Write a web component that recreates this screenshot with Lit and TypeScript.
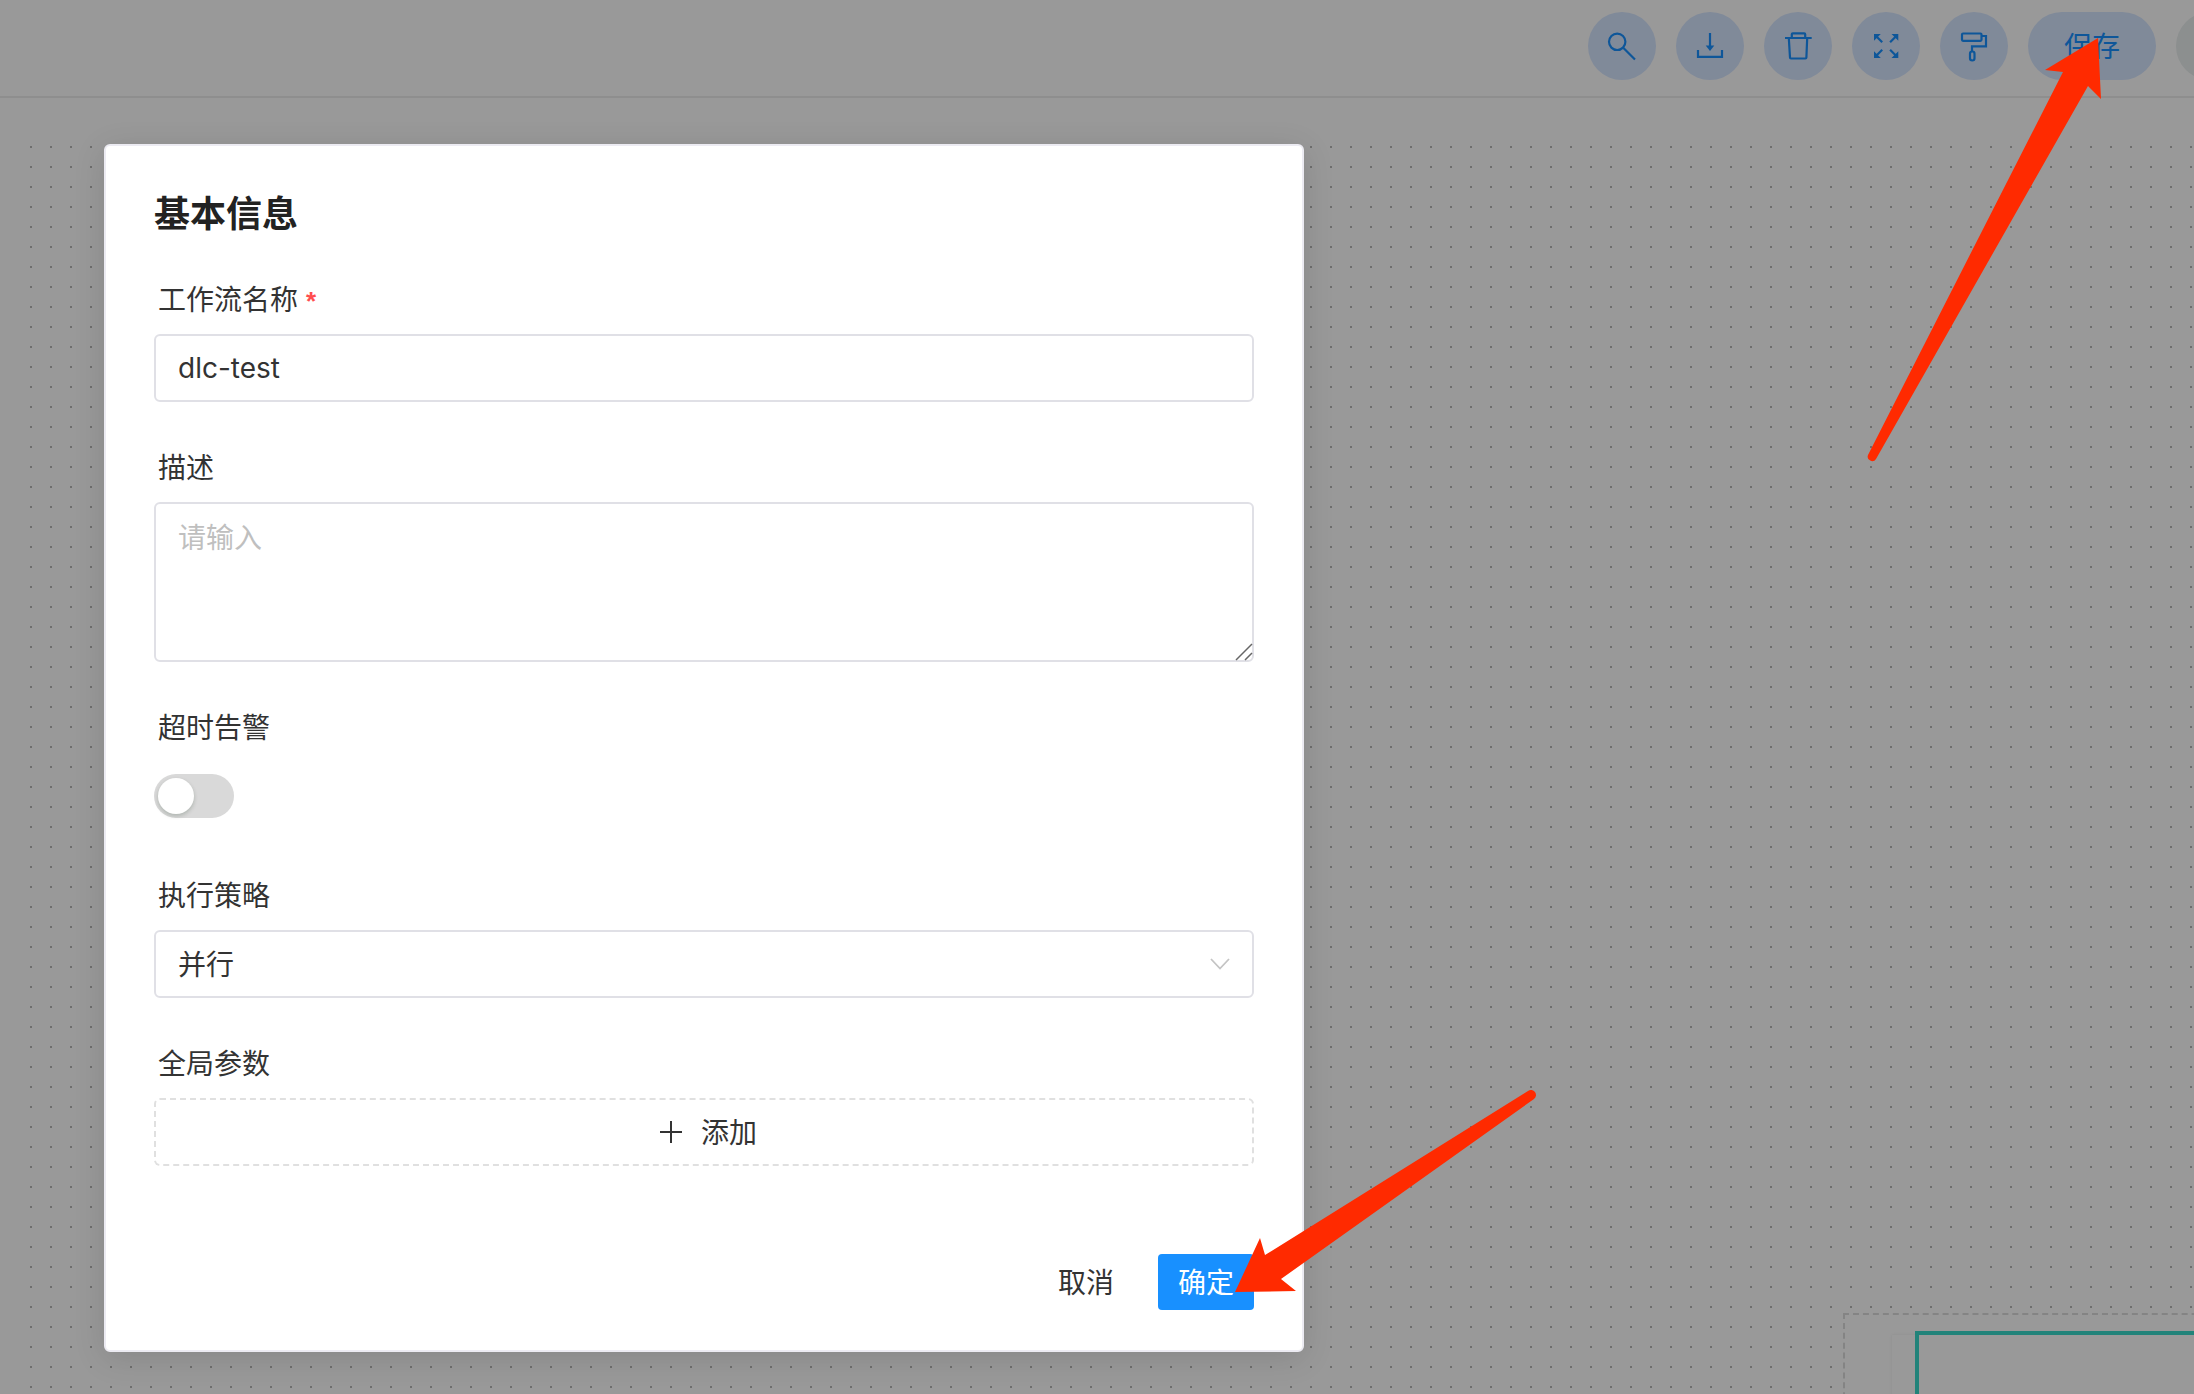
import { LitElement, html, css, svg } from "lit";
import { customElement } from "lit/decorators.js";

const ICONS = [
  svg`<circle cx="11.200" cy="11.800" r="8.200"/><path d="M17.500 18l11.500 11.500"/>`,
  svg`<path d="M16 3v14"/><path class="fill" d="M11.700 15.500h8.600L16 21z"/><path d="M4 20v6.800h24V20"/>`,
  svg`<path d="M3 8h26.700M9.800 8V4.300a1 1 0 0 1 1-1h11.400a1 1 0 0 1 1 1V8M6.800 8l1.200 19.500a1 1 0 0 0 1 1h14.400a1 1 0 0 0 1-1L25.200 8"/>`,
  svg`<path class="fill" d="M4 4h6.800L4 10.800zM28.300 4v6.800L21.500 4zM4 28v-6.800L10.800 28zM28.300 28h-6.800l6.800-6.800z"/><path d="M6.500 6.500l5.700 5.700M25.800 6.500l-5.700 5.700M6.500 25.500l5.700-5.700M25.800 25.500l-5.700-5.700"/>`,
  svg`<rect x="4" y="3.500" width="19.500" height="7.300" rx="1"/><path d="M23.500 6H28v10.300H14v5"/><rect x="12" y="21.500" width="4.500" height="9" rx="2.200"/>`,
];

@customElement("app-root")
export class AppRoot extends LitElement {
  static styles = css`
    :host {
      display: block;
      position: relative;
      width: 2194px;
      height: 1394px;
      overflow: hidden;
      background: #fff;
      font-family: "Inter", "Noto Sans CJK SC", sans-serif;
      color: #262626;
    }
    .page {
      display: flex;
      flex-direction: column;
      height: 100%;
    }
    .header {
      flex: none;
      box-sizing: border-box;
      height: 98px;
      border-bottom: 2px solid #ededed;
      padding: 12px 0 0 1588px;
      display: flex;
      gap: 20px;
      align-items: flex-start;
    }
    .tool {
      flex: none;
      width: 68px;
      height: 68px;
      border-radius: 34px;
      background: #d6e6ff;
      color: #1890ff;
      display: flex;
      align-items: center;
      justify-content: center;
      font-size: 28px;
      font-family: "Noto Sans CJK SC", sans-serif;
    }
    .tool svg {
      width: 32px;
      height: 32px;
      fill: none;
      stroke: currentColor;
      stroke-width: 2.2;
    }
    .tool .fill {
      fill: currentColor;
      stroke: none;
    }
    .tool.save {
      width: 128px;
      box-sizing: border-box;
      padding-bottom: 2px;
    }
    .tool.ghost {
      background: #e9eeee;
    }
    .canvas {
      flex: 1;
      min-height: 0;
      padding: 39px 0 0 20px;
      display: flex;
    }
    .dots {
      flex: 1;
      position: relative;
      overflow: hidden;
      background-image: radial-gradient(circle at 11px 10px, #b8b8b8 1.3px, transparent 1.4px);
      background-size: 20px 20px;
    }
    .group {
      position: absolute;
      left: 1823px;
      top: 1176px;
      width: 500px;
      height: 200px;
      border: 2px dashed #dcdcdc;
      background: #fff;
    }
    .shade {
      position: absolute;
      left: 47px;
      top: 20px;
      width: 400px;
      height: 200px;
      background: #fff;
      box-shadow: 0 0 3px rgba(0, 0, 0, 0.08);
    }
    .node {
      position: absolute;
      left: 70px;
      top: 16px;
      width: 400px;
      height: 200px;
      border: 4px solid #3adacb;
    }
    .mask {
      position: absolute;
      inset: 0;
      background: rgba(0, 0, 0, 0.4);
    }
    .modal {
      position: absolute;
      left: 104px;
      top: 144px;
      width: 1200px;
      box-sizing: border-box;
      padding: 32px 48px 40px;
      background: #fff;
      border: 2px solid #ecebf2;
      border-radius: 6px;
      box-shadow: 0 6px 32px rgba(0, 0, 0, 0.12);
    }
    h2 {
      margin: 0 0 44px;
      font-size: 36px;
      line-height: 66px;
      font-weight: 700;
      color: #222;
      font-family: "Noto Sans CJK SC", sans-serif;
      height: 58px;
    }
    .item {
      margin-bottom: 46px;
    }
    .label {
      height: 40px;
      line-height: 36px;
      margin: 0 0 14px;
      padding-left: 4px;
      font-size: 28px;
      color: #333;
      font-family: "Noto Sans CJK SC", sans-serif;
    }
    .req {
      color: #ff4d4f;
      margin-left: 8px;
      font-size: 26px;
      font-weight: 700;
      font-family: "Liberation Sans", sans-serif;
    }
    .field,
    input,
    textarea {
      box-sizing: border-box;
      display: block;
      width: 100%;
      border: 2px solid #e0e0e6;
      border-radius: 6px;
      background: #fff;
      font-size: 28px;
      color: #333;
      font-family: "Inter", "Noto Sans CJK SC", sans-serif;
      outline: none;
      margin: 0;
    }
    input {
      height: 68px;
      padding: 0 22px;
    }
    .area {
      position: relative;
    }
    textarea {
      height: 160px;
      padding: 14px 22px;
      line-height: 40px;
      resize: none;
    }
    textarea::placeholder {
      color: #bfbfbf;
    }
    .grip {
      position: absolute;
      right: 0;
      bottom: 0;
      width: 20px;
      height: 20px;
      fill: none;
      stroke: #666;
      stroke-width: 1.5;
    }
    .toggle-row {
      height: 68px;
      display: flex;
      align-items: center;
    }
    .toggle {
      width: 80px;
      height: 44px;
      border-radius: 22px;
      background: #d9d9d9;
      padding: 4px;
      box-sizing: border-box;
    }
    .knob {
      width: 36px;
      height: 36px;
      border-radius: 50%;
      background: #fff;
      box-shadow: 0 2px 4px rgba(0, 35, 11, 0.2);
    }
    .select {
      height: 68px;
      padding: 0 22px;
      display: flex;
      align-items: center;
      justify-content: space-between;
    }
    .select span {
      padding-bottom: 3px;
    }
    .select svg {
      width: 20px;
      height: 12px;
      fill: none;
      stroke: #c4c4c4;
      stroke-width: 1.8;
    }
    .add {
      height: 68px;
      box-sizing: border-box;
      border: 2px dashed #e0e0e0;
      border-radius: 6px;
      padding-left: 8px;
      display: flex;
      align-items: center;
      justify-content: center;
      gap: 18px;
      font-size: 28px;
      color: #333;
      font-family: "Noto Sans CJK SC", sans-serif;
    }
    .add span {
      padding-bottom: 3px;
    }
    .add svg {
      width: 24px;
      height: 24px;
      fill: none;
      stroke: #333;
      stroke-width: 2;
    }
    .item.last {
      margin-bottom: 88px;
    }
    .footer {
      display: flex;
      justify-content: flex-end;
      align-items: center;
      gap: 16px;
    }
    .btn {
      height: 56px;
      box-sizing: border-box;
      padding: 0 20px 3px;
      border-radius: 4px;
      font-size: 28px;
      display: flex;
      align-items: center;
      font-family: "Noto Sans CJK SC", sans-serif;
    }
    .btn.text {
      padding: 0 28px 3px;
      color: #333;
    }
    .btn.primary {
      background: #1890ff;
      color: #fff;
    }
    .arrows {
      position: absolute;
      inset: 0;
      width: 100%;
      height: 100%;
      pointer-events: none;
    }
    .arrows path {
      fill: #ff2a00;
    }
  `;

  render() {
    return html`
      <div class="page">
        <div class="header">
          ${ICONS.map(
            (i) => html`<div class="tool"><svg viewBox="0 0 32 32">${i}</svg></div>`
          )}
          <div class="tool save">保存</div>
          <div class="tool ghost"></div>
        </div>
        <div class="canvas">
          <div class="dots">
            <div class="group">
              <div class="shade"></div>
              <div class="node"></div>
            </div>
          </div>
        </div>
      </div>
      <div class="mask"></div>
      <div class="modal">
        <h2>基本信息</h2>
        <div class="item">
          <div class="label">工作流名称<span class="req">*</span></div>
          <input value="dlc-test" />
        </div>
        <div class="item">
          <div class="label">描述</div>
          <div class="area">
            <textarea placeholder="请输入"></textarea>
            <svg class="grip" viewBox="0 0 20 20"><path d="M2 18L18 2M11 18l7-7"/></svg>
          </div>
        </div>
        <div class="item">
          <div class="label">超时告警</div>
          <div class="toggle-row"><div class="toggle"><div class="knob"></div></div></div>
        </div>
        <div class="item">
          <div class="label">执行策略</div>
          <div class="field select">
            <span>并行</span>
            <svg viewBox="0 0 20 12"><path d="M1 1l9 9.500L19 1"/></svg>
          </div>
        </div>
        <div class="item last">
          <div class="label">全局参数</div>
          <div class="add">
            <svg viewBox="0 0 24 24"><path d="M12 1v22M1 12h22"/></svg>
            <span>添加</span>
          </div>
        </div>
        <div class="footer">
          <div class="btn text">取消</div>
          <div class="btn primary">确定</div>
        </div>
      </div>
      <svg class="arrows" viewBox="0 0 2194 1394">
        <path d="M2098 38L2045 70L2063 72L1868 455A4.500 4.500 0 0 0 1876 459L2088 86L2101 99Z" />
        <path d="M1235 1292L1260 1238L1265 1255L1528 1091A5 5 0 0 1 1534 1099L1281 1279L1296 1291Z" />
      </svg>
    `;
  }
}
